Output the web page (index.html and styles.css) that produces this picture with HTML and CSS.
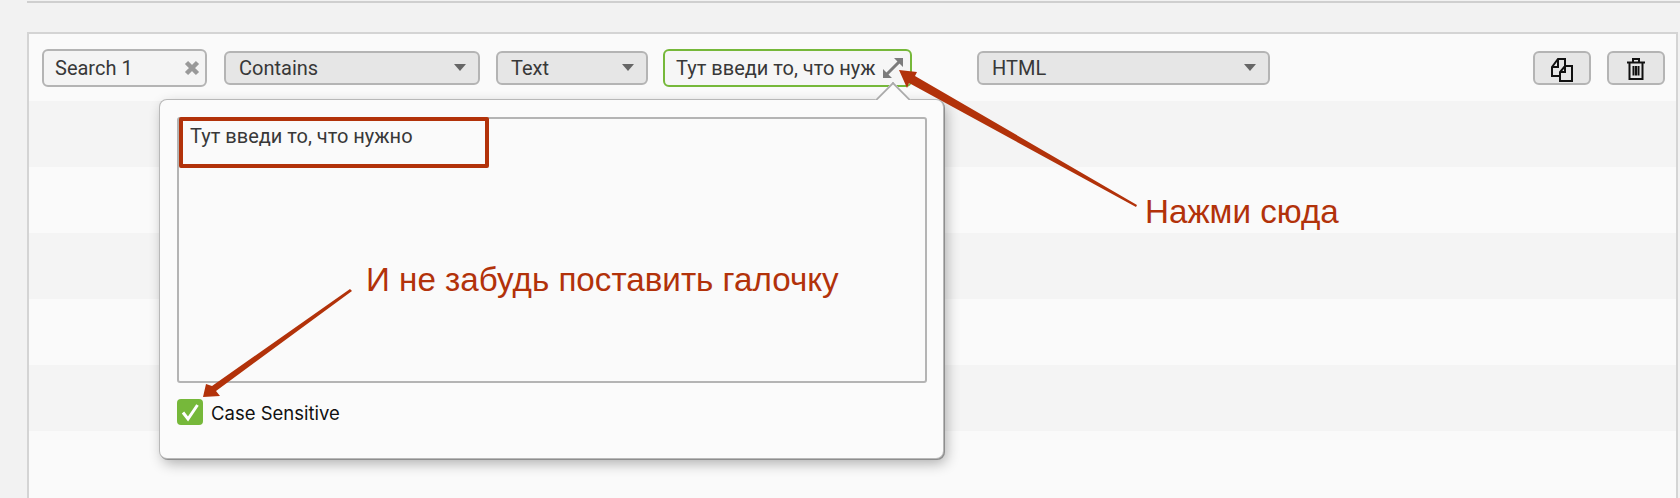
FILE: index.html
```html
<!DOCTYPE html>
<html lang="en">
<head>
    <meta charset="UTF-8">
    <title>Search settings</title>
    <link rel="stylesheet" href="styles.css">
</head>
<body>
<div class="top-line"></div>
<main class="panel">
    <div class="toolbar">
        <div class="field name-field">
            <span>Search 1</span>
            <svg class="clear-icon" viewBox="0 0 16 16" width="16" height="16"><path d="M2.500 2.500 13.500 13.500M13.500 2.500 2.500 13.500"/></svg>
        </div>
        <div class="select contains-select"><span>Contains</span><i class="caret"></i></div>
        <div class="select text-select"><span>Text</span><i class="caret"></i></div>
        <div class="field value-field">
            <span class="value-text">Тут введи то, что нуж</span>
            <svg class="expand-icon" viewBox="0 0 20 20" width="20" height="20">
                <path d="M4 16 16 4" />
                <path class="tip" d="M11 0H20V9ZM0 11V20H9Z"/>
            </svg>
        </div>
        <div class="select html-select"><span>HTML</span><i class="caret"></i></div>
        <div class="actions">
            <button class="icon-button">
                <svg viewBox="0 0 24 28" width="24" height="28"><path d="M11 22H2V13L8 5H15V12M8 5V13H2M15 12H22V27H10V18ZM15 12V18H10"/></svg>
            </button>
            <button class="icon-button">
                <svg viewBox="0 0 24 28" width="24" height="28"><path d="M3 8.500H21M9 8V5H15V8M5.500 8.500V25H18.500V8.500M9.500 12V21.500M12 12V21.500M14.500 12V21.500"/></svg>
            </button>
        </div>
    </div>
    <div class="stripes">
        <div class="stripe"></div>
        <div class="stripe"></div>
        <div class="stripe"></div>
        <div class="stripe"></div>
        <div class="stripe"></div>
        <div class="stripe"></div>
    </div>

    <div class="popup">
        <i class="popup-tip"></i>
        <div class="textarea">Тут введи то, что нужно</div>
        <label class="check-row">
            <span class="checkbox">
                <svg viewBox="0 0 26 26" width="26" height="26"><path d="M6 13.500 11 20 20.500 6"/></svg>
            </span>
            <span class="check-label">Case Sensitive</span>
        </label>
    </div>
</main>

<!-- red notes drawn over the screenshot -->
<div class="note-box"></div>
<p class="note note-click">Нажми сюда</p>
<p class="note note-check">И не забудь поставить галочку</p>
<svg class="arrows" viewBox="0 0 1680 498" width="1680" height="498">
    <path d="M899 70 917 72 915 76 1137 205 1136 207 909 83 907 88Z"/>
    <path d="M203 397 206 384 212 386 350 289 352 291 216 391 220 396Z"/>
</svg>
</body>
</html>
```

FILE: styles.css
```css
:root {
    --note-color: #b2320a;
    --line-color: #b4b4b4;
    --green: #76b83a;
}
html, body {
    height: 100%;
}
body {
    margin: 0;
    padding: 0 0 0 27px;
    position: relative;
    overflow: hidden;
    background: #f2f2f2;
    color: #383838;
    font-family: Roboto, sans-serif;
    font-size: 20px;
}
.top-line {
    height: 2px;
    margin-top: 1px;
    background: #cfcfcf;
}
.panel {
    position: relative;
    margin: 29px 0 0 0;
    width: 1651px;
    height: 470px;
    box-sizing: border-box;
    background: #fafafa;
    border-top: 2px solid #d4d4d4;
    border-left: 2px solid #d4d4d4;
    border-right: 2px solid #d4d4d4;
}
.toolbar {
    display: flex;
    align-items: center;
    height: 67px;
    padding: 0 11px 0 13px;
}
.stripe {
    height: 66px;
}
.stripe:nth-child(odd) {
    background: #f4f4f4;
}
.field, .select, .icon-button {
    box-sizing: border-box;
    display: flex;
    align-items: center;
    border-radius: 6px;
}
.field {
    height: 38px;
    background: #f4f4f4;
    border: 2px solid var(--line-color);
    padding: 0 5px 0 11px;
}
.select {
    height: 34px;
    background: #e6e6e6;
    border: 2px solid var(--line-color);
    justify-content: space-between;
    padding: 0 12px 0 13px;
}
.caret {
    width: 0;
    height: 0;
    border-left: 6.500px solid transparent;
    border-right: 6.500px solid transparent;
    border-top: 7px solid #666;
}
.name-field {
    width: 165px;
    justify-content: space-between;
    margin-right: 17px;
}
.clear-icon path {
    fill: none;
    stroke: #999;
    stroke-width: 4.500;
}
.contains-select {
    width: 256px;
    margin-right: 16px;
}
.text-select {
    width: 152px;
    margin-right: 15px;
}
.value-field {
    width: 249px;
    margin-right: 65px;
    border-color: var(--green);
    background: #f6f6f6;
    padding-right: 7px;
}
.value-text {
    flex: 1;
    white-space: nowrap;
}
.expand-icon {
    flex: none;
}
.expand-icon path {
    fill: none;
    stroke: #7c7c7c;
    stroke-width: 3;
}
.expand-icon .tip {
    fill: #7c7c7c;
    stroke: none;
}
.html-select {
    width: 293px;
}
.actions {
    display: flex;
    gap: 16px;
    margin-left: auto;
}
.icon-button {
    width: 58px;
    height: 34px;
    justify-content: center;
    padding: 0;
    background: #e6e6e6;
    border: 2px solid var(--line-color);
}
.icon-button path {
    fill: none;
    stroke: #111;
    stroke-width: 2;
}
.popup {
    position: absolute;
    left: 131px;
    top: 66px;
    width: 783px;
    height: 358px;
    box-sizing: border-box;
    padding: 17px 16px 0 17px;
    background: #fbfbfb;
    border-radius: 7px;
    box-shadow: 0 0 0 1px #b8b8b8, 1px 1px 0 1px #8e8e8e, 3px 5px 14px rgba(0, 0, 0, .32);
}
.popup-tip {
    position: absolute;
    right: 37px;
    top: -13px;
    width: 26px;
    height: 26px;
    box-sizing: border-box;
    background: #fbfbfb;
    border-top: 2px solid #aaa;
    border-left: 2px solid #aaa;
    clip-path: polygon(0 0, 100% 0, 0 100%);
    transform: rotate(45deg);
}
.textarea {
    box-sizing: border-box;
    height: 266px;
    padding: 7px 11px;
    border: 2px solid var(--line-color);
    border-radius: 3px;
    background: #fafafa;
    line-height: 20px;
}
.check-row {
    display: flex;
    align-items: center;
    gap: 8px;
    margin-top: 16px;
    color: #111;
    font-family: Inter, sans-serif;
    font-size: 18.500px;
}
.check-label {
    margin-top: 1px;
}
.checkbox {
    width: 26px;
    height: 26px;
    background: var(--green);
    border-radius: 4px;
}
.checkbox svg {
    display: block;
}
.checkbox path {
    fill: none;
    stroke: #fff;
    stroke-width: 3;
}
.note-box {
    position: absolute;
    left: 179px;
    top: 117px;
    width: 310px;
    height: 51px;
    box-sizing: border-box;
    border: 4px solid var(--note-color);
    border-radius: 2px;
}
.note {
    position: absolute;
    margin: 0;
    color: var(--note-color);
    font-family: "Liberation Sans", Arial, sans-serif;
    font-size: 33.200px;
    line-height: 36px;
    white-space: nowrap;
}
.note-click {
    left: 1145px;
    top: 194px;
}
.note-check {
    left: 366px;
    top: 262px;
}
.arrows {
    position: absolute;
    left: 0;
    top: 0;
}
.arrows path {
    fill: var(--note-color);
}
```
